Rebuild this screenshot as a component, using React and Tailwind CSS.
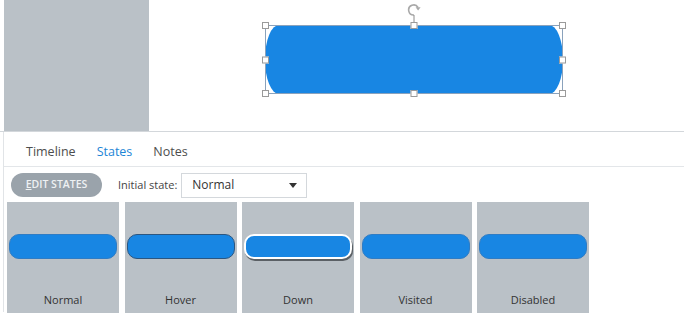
import React from 'react';

const STATES = [
    { name: 'Normal', cls: 'border border-[#2f7cc4]' },
    { name: 'Hover', cls: 'border border-[#2c5680]' },
    { name: 'Down', cls: 'border-2 border-white shadow-[1px_2px_0_#5b6065]' },
    { name: 'Visited', cls: 'border border-[#2f7cc4]' },
    { name: 'Disabled', cls: 'border border-[#2f7cc4]' },
];

function Handle({ className }) {
    return <span className={`absolute w-[7px] h-[7px] bg-white border border-[#9a9a9a] ${className}`} />;
}

function RotateIcon() {
    return (
        <svg width="16" height="26" viewBox="0 0 16 26" className="absolute left-1/2 -translate-x-1/2 -top-[22px]">
            <path d="M12 4.5 A5 5 0 1 0 8 12" fill="none" stroke="#a9a9a9" strokeWidth="1.6" />
            <path d="M9.6 4.2 L14.6 4.2 L12.1 7.6 Z" fill="#a9a9a9" />
            <line x1="8" y1="12" x2="8" y2="22" stroke="#8c8c8c" strokeWidth="1" />
        </svg>
    );
}

export default function App() {
    return (
        <div className="w-[684px] h-[313px] overflow-hidden bg-white" style={{ fontFamily: '"Open Sans", "Noto Sans", sans-serif' }}>
            {/* Canvas */}
            <div className="flex h-[132px] border-b border-[#d3d7db]">
                <div className="ml-[4px] w-[145px] bg-[#bac1c7]" />
                <div className="flex-1 pl-[116px] pt-[25px]">
                    <div className="relative w-[298px] h-[69px]">
                        <div className="w-full h-full bg-[#1886e3] rounded-[14px/34px]" />
                        <div className="absolute inset-0 border border-[#8aa2bc] pointer-events-none" />
                        <RotateIcon />
                        <Handle className="-left-[3px] -top-[3px]" />
                        <Handle className="left-1/2 -translate-x-1/2 -top-[3px]" />
                        <Handle className="-right-[3px] -top-[3px]" />
                        <Handle className="-left-[3px] top-1/2 -translate-y-1/2" />
                        <Handle className="-right-[3px] top-1/2 -translate-y-1/2" />
                        <Handle className="-left-[3px] -bottom-[3px]" />
                        <Handle className="left-1/2 -translate-x-1/2 -bottom-[3px]" />
                        <Handle className="-right-[3px] -bottom-[3px]" />
                    </div>
                </div>
            </div>

            {/* Panel */}
            <div className="ml-[3px] border-l border-[#e1e4e7] h-[180px]">
                <div className="flex items-center gap-[21px] h-[35px] pl-[22px] pt-[6px] border-b border-[#e3e6e9] text-[12.5px]">
                    <span className="text-[#4d4d4d]">Timeline</span>
                    <span className="text-[#1d86d6]">States</span>
                    <span className="text-[#4d4d4d]">Notes</span>
                </div>
                <div className="flex items-center h-[35px] pl-[7px] pt-[1px]">
                    <button className="w-[91px] h-[24px] rounded-full bg-[#9aa3ab] text-[#eef1f3] text-[10.5px] font-semibold">
                        <span className="underline">E</span>DIT STATES
                    </button>
                    <span className="ml-[16px] text-[11px] text-[#444]">Initial state:</span>
                    <div className="ml-[4px] w-[126px] h-[25px] border border-[#d4d8dc] flex items-center justify-between pl-[10px] pr-[9px] text-[12px] text-[#333]">
                        <span>Normal</span>
                        <svg width="8" height="5" viewBox="0 0 8 5"><path d="M0 0 H8 L4 5 Z" fill="#333" /></svg>
                    </div>
                </div>
                <div className="flex gap-[5.5px] pl-[3px]">
                    {STATES.map(s => (
                        <div key={s.name} className="w-[112px] h-[111px] bg-[#bac1c7] flex flex-col items-center">
                            <div className={`mt-[32px] w-[108px] h-[25px] rounded-[10px] bg-[#1886e3] ${s.cls}`} />
                            <div className="mt-[33px] text-[11px] text-[#333]">{s.name}</div>
                        </div>
                    ))}
                </div>
            </div>
        </div>
    );
}
